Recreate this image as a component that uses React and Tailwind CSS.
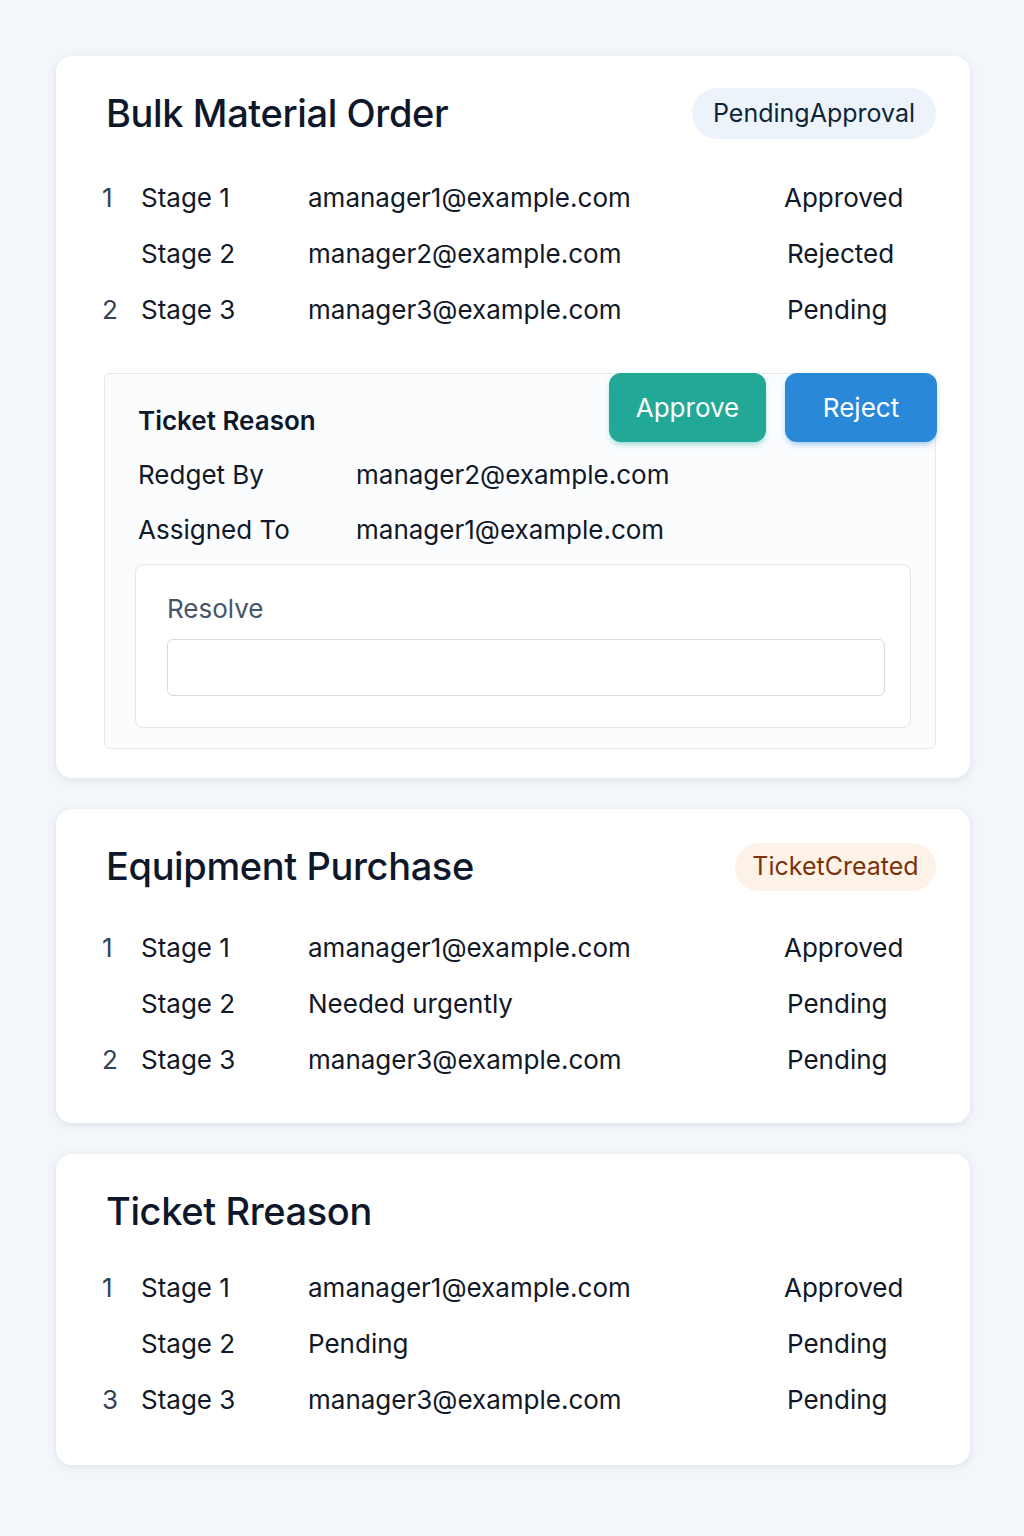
import React from "react";

const cards = [
  {
    title: "Bulk Material Order",
    badge: { text: "PendingApproval", cls: "bg-[#edf3fa] text-[#0f2536] w-[244px] h-[51px]" },
    rows: [
      ["1", "Stage 1", "amanager1@example.com", "Approved"],
      ["", "Stage 2", "manager2@example.com", "Rejected"],
      ["2", "Stage 3", "manager3@example.com", "Pending"],
    ],
    gap: "mt-[30px]",
    pb: "pb-[29px]",
    ticket: true,
  },
  {
    title: "Equipment Purchase",
    badge: { text: "TicketCreated", cls: "bg-[#fdf2e7] text-[#7a330b] w-[201px] h-[48px]" },
    rows: [
      ["1", "Stage 1", "amanager1@example.com", "Approved"],
      ["", "Stage 2", "Needed urgently", "Pending"],
      ["2", "Stage 3", "manager3@example.com", "Pending"],
    ],
    gap: "mt-[27px]",
    pb: "pb-[36px]",
  },
  {
    title: "Ticket Rreason",
    rows: [
      ["1", "Stage 1", "amanager1@example.com", "Approved"],
      ["", "Stage 2", "Pending", "Pending"],
      ["3", "Stage 3", "manager3@example.com", "Pending"],
    ],
    gap: "mt-[22px]",
    pb: "pb-[38px]",
  },
];

function StageRow({ row }) {
  const [num, stage, who, status] = row;
  return (
    <div className="flex items-center h-14 text-[26px] text-[#111827]">
      <div className="-ml-[2px] w-[39px] text-[#334155]">{num}</div>
      <div className="w-[167px]">{stage}</div>
      <div className="flex-1">{who}</div>
      <div className={status === "Approved" ? "w-[152px] -ml-[3px]" : "w-[149px]"}>{status}</div>
    </div>
  );
}

function TicketBox() {
  return (
    <div className="relative mt-[36px] bg-[#fafcfe] border border-[#e4e9f0] rounded-md pl-[30px] pr-[24px] pt-[28px] pb-[20px]">
      <div className="absolute -top-[1px] -right-[2px] flex gap-[19px]">
        <button className="w-[157px] h-[69px] rounded-xl bg-[#22a896] text-white text-[26px] shadow-md shadow-[#22a896]/30">
          Approve
        </button>
        <button className="w-[152px] h-[69px] rounded-xl bg-[#2a88d8] text-white text-[26px] shadow-md shadow-[#2a88d8]/30">
          Reject
        </button>
      </div>
      <div className="pl-[3px] h-[36px] flex items-center text-[26px] font-semibold text-[#0f172a]">
        Ticket Reason
      </div>
      <div className="pl-[3px] mt-[9px] flex items-center h-[55px] text-[26px] text-[#111827]">
        <div className="w-[218px]">Redget By</div>
        <div>manager2@example.com</div>
      </div>
      <div className="pl-[3px] flex items-center h-[55px] text-[26px] text-[#111827]">
        <div className="w-[218px]">Assigned To</div>
        <div>manager1@example.com</div>
      </div>
      <div className="mt-[7px] bg-white border border-[#e2e7ee] rounded-lg pl-[31px] pr-[25px] pt-[26px] pb-[31px]">
        <div className="text-[26px] text-[#475569] h-[34px] flex items-center">Resolve</div>
        <input className="mt-[14px] block w-full h-[57px] border border-[#d5dbe3] rounded-md bg-white" />
      </div>
    </div>
  );
}

function Card({ card }) {
  return (
    <div className={"bg-white rounded-2xl shadow-[0_2px_8px_rgba(100,116,139,0.15)] pl-12 pr-[34px] pt-8 " + card.pb}>
      <div className="flex items-center justify-between h-[51px]">
        <h2 className="ml-0.5 text-[38px] font-medium tracking-[-0.01em] text-[#0f172a]">{card.title}</h2>
        {card.badge && (
          <span className={"flex items-center justify-center rounded-full text-[25px] " + card.badge.cls}>
            {card.badge.text}
          </span>
        )}
      </div>
      <div className={card.gap}>
        {card.rows.map((r, i) => (
          <StageRow key={i} row={r} />
        ))}
      </div>
      {card.ticket && <TicketBox />}
    </div>
  );
}

export default function App() {
  return (
    <div className="min-h-[1536px] bg-[#f3f6fa] pt-[56px] pl-[56px] pr-[54px] pb-10" style={{ fontFamily: "Inter, 'Noto Sans', sans-serif" }}>
      <div className="flex flex-col gap-[31px]">
        {cards.map((c, i) => (
          <Card key={i} card={c} />
        ))}
      </div>
    </div>
  );
}
